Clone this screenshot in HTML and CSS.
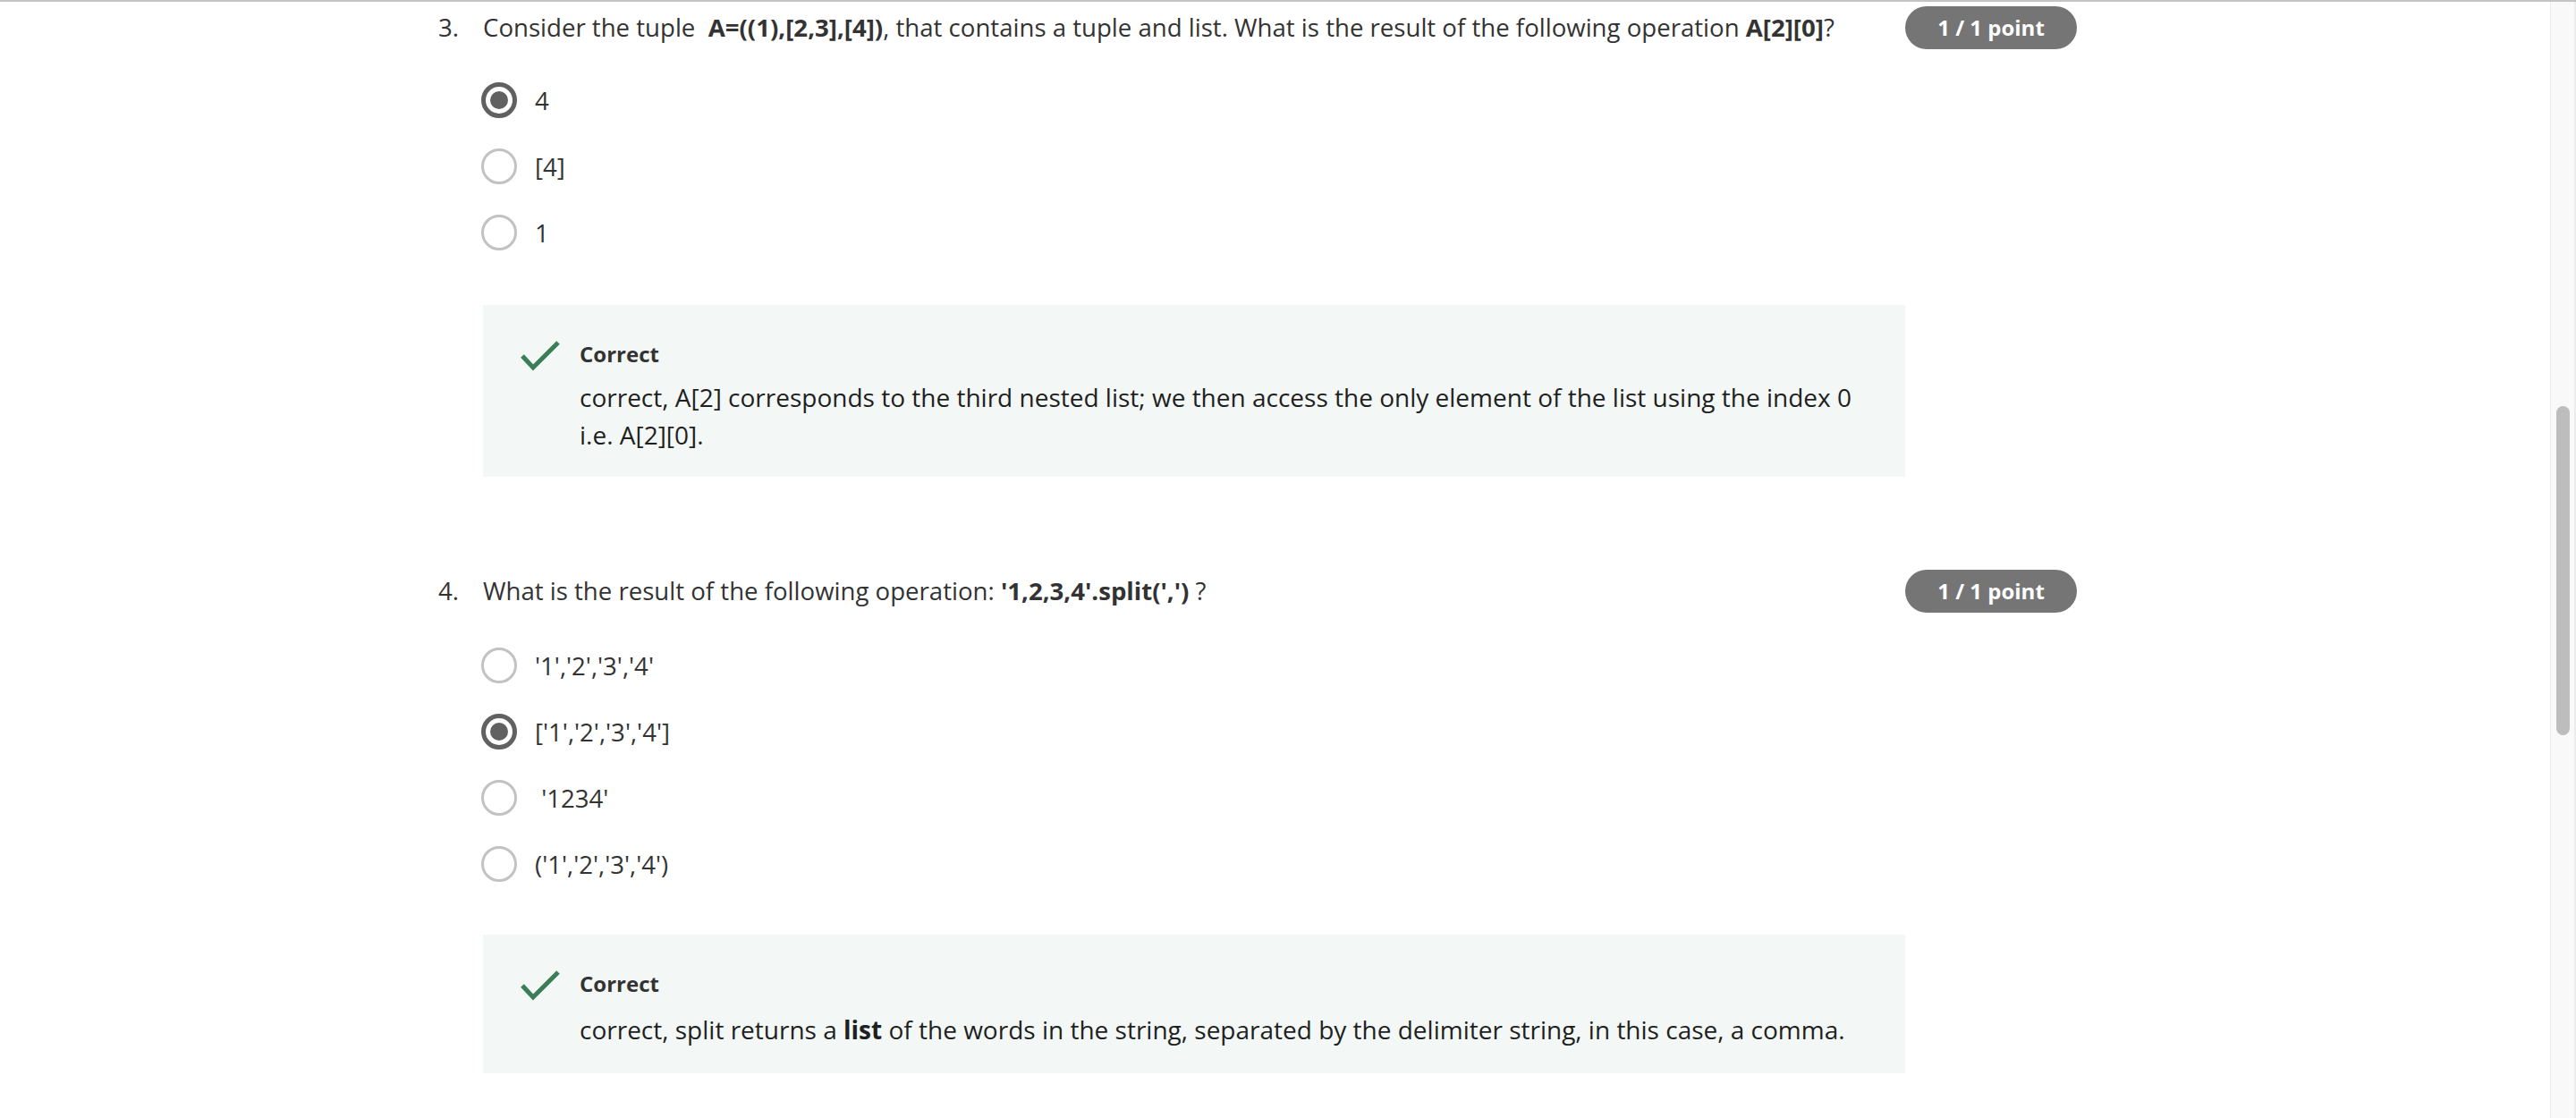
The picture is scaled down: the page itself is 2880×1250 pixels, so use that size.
FILE: index.html
```html
<!DOCTYPE html>
<html lang="en">
<head>
<meta charset="utf-8">
<title>Quiz</title>
<link rel="stylesheet" href="styles.css">
</head>
<body>
<div class="viewport">
  <main class="main">
    <section class="question q3">
      <div class="q-num">3.</div>
      <div class="q-body">
        <div class="q-text">Consider the tuple&nbsp; <b>A=((1),[2,3],[4])</b>, that contains a tuple and list. What is the result of the following operation <b>A[2][0]</b>?</div>
        <ul class="options">
          <li class="option"><span class="radio checked"></span><span class="opt-text">4</span></li>
          <li class="option"><span class="radio"></span><span class="opt-text">[4]</span></li>
          <li class="option"><span class="radio"></span><span class="opt-text">1</span></li>
        </ul>
        <div class="feedback">
          <svg class="check" width="44" height="34" viewBox="0 0 44 34"><polyline points="2,17 14,30 42,2" fill="none" stroke="#3b7d57" stroke-width="5"/></svg>
          <div class="fb-body">
            <div class="fb-title">Correct</div>
            <p class="fb-text">correct, A[2] corresponds to the third nested list; we then access the only element of the list using the index 0 i.e. A[2][0].</p>
          </div>
        </div>
      </div>
      <div class="q-side"><span class="badge">1 / 1 point</span></div>
    </section>

    <section class="question q4">
      <div class="q-num">4.</div>
      <div class="q-body">
        <div class="q-text">What is the result of the following operation: <b>'1,2,3,4'.split(',')</b> ?</div>
        <ul class="options">
          <li class="option"><span class="radio"></span><span class="opt-text">'1','2','3','4'</span></li>
          <li class="option"><span class="radio checked"></span><span class="opt-text">['1','2','3','4']</span></li>
          <li class="option"><span class="radio"></span><span class="opt-text">&nbsp;'1234'</span></li>
          <li class="option"><span class="radio"></span><span class="opt-text">('1','2','3','4')</span></li>
        </ul>
        <div class="feedback">
          <svg class="check" width="44" height="34" viewBox="0 0 44 34"><polyline points="2,17 14,30 42,2" fill="none" stroke="#3b7d57" stroke-width="5"/></svg>
          <div class="fb-body">
            <div class="fb-title">Correct</div>
            <p class="fb-text">correct, split returns a <b>list</b> of the words in the string, separated by the delimiter string, in this case, a comma.</p>
          </div>
        </div>
      </div>
      <div class="q-side"><span class="badge">1 / 1 point</span></div>
    </section>
  </main>
  <div class="scrollbar"><div class="thumb"></div></div>
</div>
</body>
</html>
```
FILE: styles.css
```css
html, body {
  margin: 0;
  padding: 0;
  background: #fff;
}
body {
  font-family: "Open Sans", "Noto Sans", sans-serif;
  color: #333;
  overflow: hidden;
}
.viewport {
  display: flex;
  height: 1250px;
  border-top: 2px solid #c4c4c4;
  box-sizing: border-box;
}
.main {
  flex: 1;
  padding-left: 490px;
  padding-top: 4px;
}
.question {
  display: grid;
  grid-template-columns: 50px 1590px auto;
  align-items: start;
}
.q4 { margin-top: 103px; }
.q-num, .q-text {
  font-size: 27.6px;
  line-height: 48px;
}
.q-text b { font-weight: 700; }
.options {
  list-style: none;
  margin: 38px 0 0;
  padding: 0;
  display: flex;
  flex-direction: column;
  gap: 34px;
}
.q4 .options { margin-top: 40px; }
.option {
  display: flex;
  align-items: center;
  gap: 20px;
  height: 40px;
}
.radio {
  width: 40px;
  height: 40px;
  box-sizing: border-box;
  border-radius: 50%;
  border: 3px solid #c2c2c2;
  display: flex;
  align-items: center;
  justify-content: center;
  flex: none;
  margin-left: -2px;
}
.radio.checked {
  border: 5px solid #616161;
}
.radio.checked::after {
  content: "";
  width: 20px;
  height: 20px;
  border-radius: 50%;
  background: #616161;
}
.opt-text {
  font-size: 27.6px;
  line-height: 40px;
  color: #333;
}
.feedback {
  margin-top: 61px;
  background: #f3f8f6;
  display: flex;
  gap: 22px;
  padding: 40px 50px 26px 42px;
}
.q4 .feedback { margin-top: 59px; padding-bottom: 28px; }
.q4 .fb-text { margin-top: 15px; }
.check { flex: none; }
.fb-body { flex: 1; }
.fb-title {
  font-size: 24px;
  font-weight: 700;
  line-height: 30px;
  color: #333;
}
.fb-text {
  margin: 12px 0 0;
  font-size: 28px;
  line-height: 42px;
  color: #1f1f1f;
}
.q-side { padding-top: 1px; }
.badge {
  display: inline-block;
  background: #757575;
  color: #fff;
  font-weight: 700;
  font-size: 24px;
  line-height: 48px;
  height: 48px;
  width: 192px;
  text-align: center;
  border-radius: 24px;
  white-space: nowrap;
}
.scrollbar {
  width: 29px;
  flex: none;
  background: #f9f9f9;
  border-left: 1px solid #ececec;
  border-right: 2px solid #ececec;
  box-sizing: border-box;
}
.thumb {
  margin: 452px 0 0 6px;
  width: 15px;
  height: 368px;
  border-radius: 8px;
  background: #bdbdbd;
}
```
